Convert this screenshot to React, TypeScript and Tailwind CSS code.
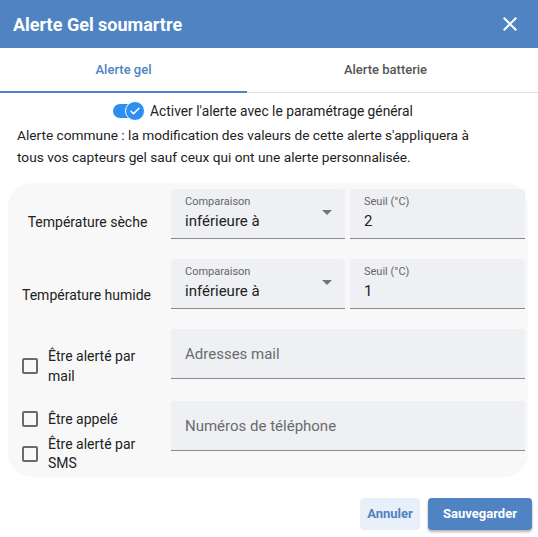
import React from "react";

function Field({ label, value, arrow, width }: { label?: string; value?: string; arrow?: boolean; width: string }) {
  return (
    <div className={`relative ${width} h-[50px] bg-[#eef0f4] rounded-t-[4px] border-b border-[#8a8a8a] px-[14px]`}>
      {label && <div className="absolute left-[14px] top-[6px] text-[11px] text-[#666] leading-[13px]">{label}</div>}
      {value && <div className="absolute left-[14px] top-[22px] text-[15px] text-[#222] leading-[20px]">{value}</div>}
      {arrow && (
        <svg className="absolute right-[6px] top-[11px]" width="24" height="24" viewBox="0 0 24 24">
          <path d="M7 10l5 5 5-5z" fill="#757575" />
        </svg>
      )}
    </div>
  );
}

function Placeholder({ text }: { text: string }) {
  return (
    <div className="relative flex-1 h-[50px] bg-[#eef0f4] rounded-t-[4px] border-b border-[#8a8a8a]">
      <div className="absolute left-[14px] top-[15px] text-[15px] text-[#6b6b6b] leading-[20px]">{text}</div>
    </div>
  );
}

function Box() {
  return <div className="w-[16px] h-[16px] border-2 border-[#6a6a6a] rounded-[2px] shrink-0" />;
}

export default function App() {
  return (
    <div className="w-[538px] h-[537px] bg-white text-[#222] relative overflow-hidden" style={{ fontFamily: "Roboto, 'Liberation Sans', sans-serif" }}>
      <div className="h-[48px] bg-[#4f83c2] flex items-center justify-between pl-[13px] pr-[16px]">
        <div className="text-white text-[18px] font-bold">Alerte Gel soumartre</div>
        <svg width="24" height="24" viewBox="0 0 24 24">
          <path d="M19 6.41 17.59 5 12 10.59 6.41 5 5 6.41 10.59 12 5 17.59 6.41 19 12 13.41 17.59 19 19 17.59 13.41 12z" fill="white" />
        </svg>
      </div>
      <div className="flex h-[45px] border-b border-[#ddd]">
        <div className="w-[247px] flex items-center justify-center text-[13px] font-medium text-[#4f83c2] border-b-2 border-[#4f83c2] mb-[-1px]">Alerte gel</div>
        <div className="w-[277px] flex items-center justify-center text-[13px] font-medium text-[#555]">Alerte batterie</div>
      </div>
      <div className="flex items-center justify-center h-[32px] pt-[4px] pr-[12px]">
        <div className="relative w-[36px] h-[20px] mr-[1px]">
          <div className="absolute left-[0px] top-[3px] w-[28px] h-[14px] rounded-full bg-[#2d8ff0]" />
          <div className="absolute left-[12px] top-[0px] w-[20px] h-[20px] rounded-full bg-[#2d8ff0] border border-white flex items-center justify-center">
            <svg width="12" height="12" viewBox="0 0 24 24">
              <path d="M4 12.5l5 5L20 6.5" stroke="white" strokeWidth="3.2" fill="none" strokeLinecap="round" strokeLinejoin="round" />
            </svg>
          </div>
        </div>
        <div className="text-[13.8px]">Activer l'alerte avec le paramétrage général</div>
      </div>
      <div className="px-[17px] text-[13.7px] leading-[22px] text-[#222] -mt-[1px]">
        Alerte commune : la modification des valeurs de cette alerte s'appliquera à
        <br />
        tous vos capteurs gel sauf ceux qui ont une alerte personnalisée.
      </div>
      <div className="mx-[8px] mt-[15px] w-[520px] h-[294px] bg-[#f8f8f8] rounded-[24px] pl-[14px] pr-[3px] pt-[6px] flex flex-col">
        <div className="flex items-end">
          <div className="w-[149px] pr-[18px] text-center text-[14px] pb-[6px]">Température sèche</div>
          <div className="flex gap-[5px]">
            <Field width="w-[174px]" label="Comparaison" value="inférieure à" arrow />
            <Field width="w-[175px]" label="Seuil (°C)" value="2" />
          </div>
        </div>
        <div className="flex items-end mt-[20px]">
          <div className="w-[149px] pr-[20px] text-center text-[14px] pb-[3px]">Température humide</div>
          <div className="flex gap-[5px]">
            <Field width="w-[174px]" label="Comparaison" value="inférieure à" arrow />
            <Field width="w-[175px]" label="Seuil (°C)" value="1" />
          </div>
        </div>
        <div className="flex items-start mt-[20px]">
          <div className="w-[149px] h-[50px] flex items-start pt-[17px]">
            <div className="flex items-center">
              <Box />
              <div className="ml-[10px] text-[14px] leading-[20px]">Être alerté par<br />mail</div>
            </div>
          </div>
          <Placeholder text="Adresses mail" />
        </div>
        <div className="flex items-start mt-[22px]">
          <div className="w-[149px] h-[50px] flex flex-col pt-[9px]">
            <div className="flex items-center h-[18px]">
              <Box />
              <div className="ml-[10px] text-[14px] leading-[20px]">Être appelé</div>
            </div>
            <div className="flex items-center mt-[7px]">
              <Box />
              <div className="ml-[10px] text-[14px] leading-[19px]">Être alerté par<br />SMS</div>
            </div>
          </div>
          <Placeholder text="Numéros de téléphone" />
        </div>
      </div>
      <div className="flex justify-end gap-[8px] pr-[6px] mt-[21px]">
        <div className="w-[60px] h-[32px] rounded-[4px] bg-[#e8eff8] text-[#4f83c2] text-[13px] font-bold flex items-center justify-center">Annuler</div>
        <div className="w-[104px] h-[32px] rounded-[4px] bg-[#4f83c2] text-white text-[13px] font-bold flex items-center justify-center shadow-[0_2px_3px_rgba(0,0,0,0.3)]">Sauvegarder</div>
      </div>
    </div>
  );
}
